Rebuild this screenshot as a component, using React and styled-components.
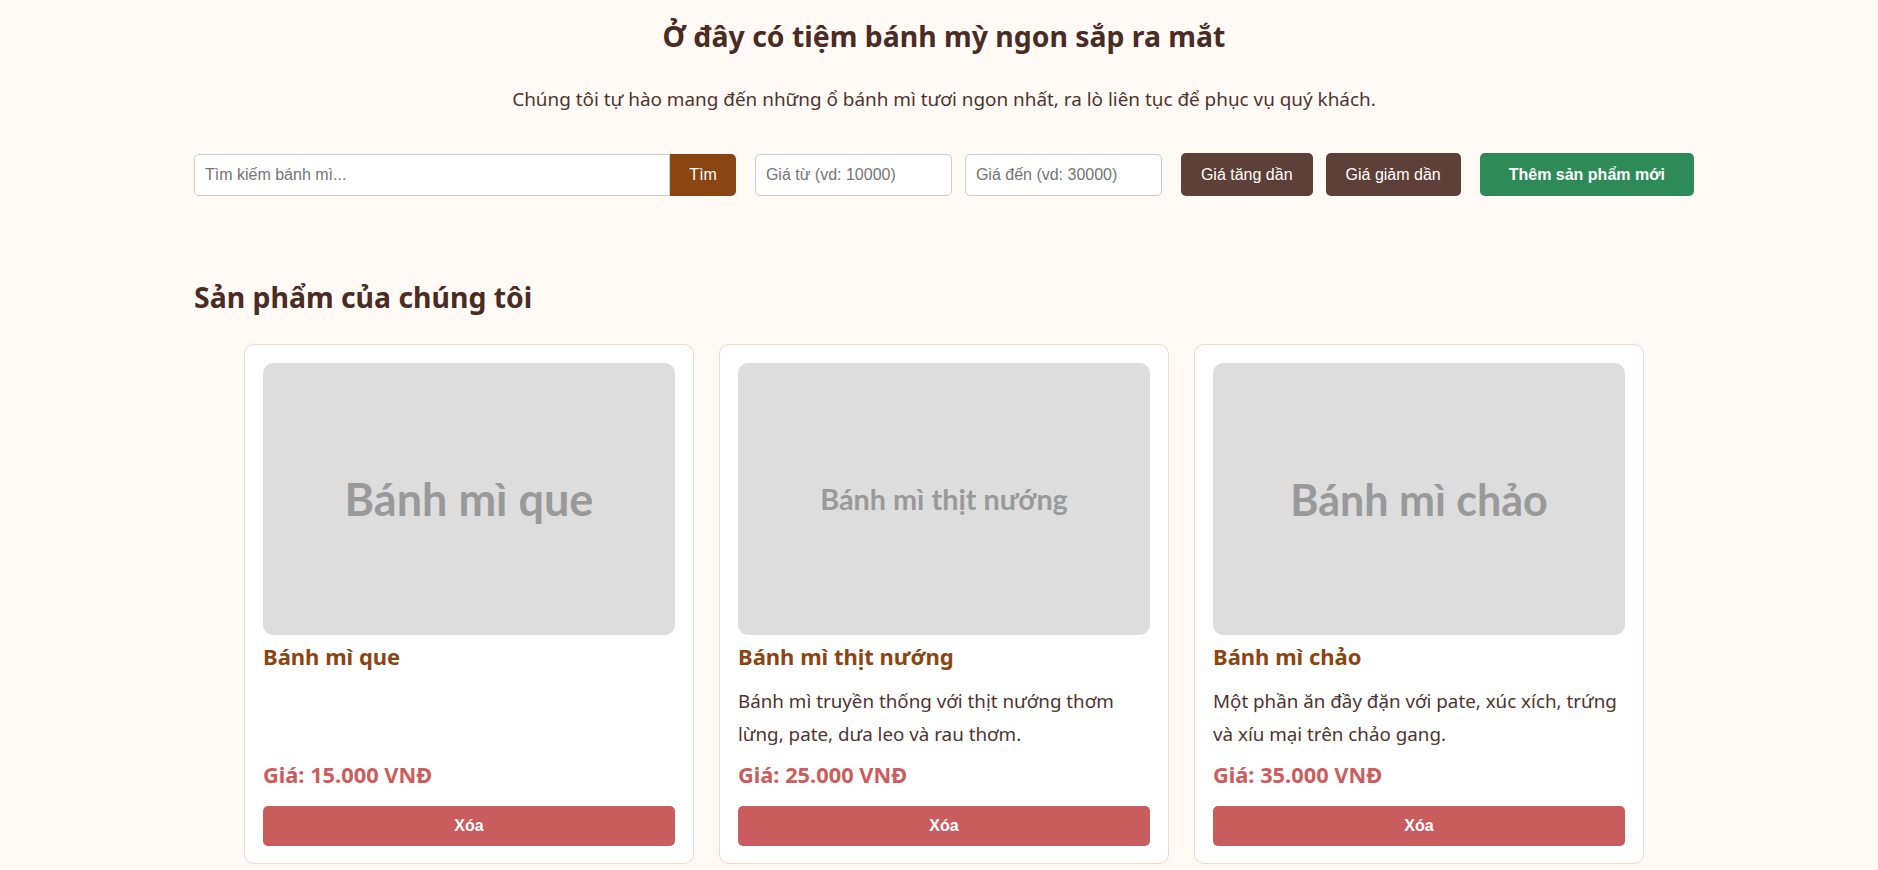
import styled, { createGlobalStyle } from 'styled-components';

const products = [
  {
    name: 'Bánh mì que',
    description: '',
    price: '15.000',
    imageSize: 45,
  },
  {
    name: 'Bánh mì thịt nướng',
    description: 'Bánh mì truyền thống với thịt nướng thơm lừng, pate, dưa leo và rau thơm.',
    price: '25.000',
    imageSize: 28.8,
  },
  {
    name: 'Bánh mì chảo',
    description: 'Một phần ăn đầy đặn với pate, xúc xích, trứng và xíu mại trên chảo gang.',
    price: '35.000',
    imageSize: 43,
  },
];

const GlobalStyle = createGlobalStyle`
  * {
    box-sizing: border-box;
  }

  body {
    margin: 0;
    background: #fffaf5;
    font-family: 'Noto Sans', 'Open Sans', sans-serif;
    color: #4e342e;
  }
`;

const Page = styled.div`
  padding: 17px 0 0 10px;
`;

const Container = styled.main`
  max-width: 1500px;
  margin: 0 auto;
`;

const Header = styled.header`
  text-align: center;
`;

const Title = styled.h1`
  margin: 0;
  font-size: 28.4px;
  line-height: 38px;
  font-weight: 700;
  color: #4a2c24;
`;

const Lead = styled.p`
  margin: 31px 0 0;
  font-size: 18.9px;
  line-height: 27px;
  color: #4e342e;
`;

const Toolbar = styled.div`
  display: flex;
  align-items: center;
  gap: 19px;
  margin-top: 40px;
`;

const SearchGroup = styled.div`
  display: flex;
  flex: 1;
  height: 42px;
`;

const Field = styled.input`
  height: 42px;
  width: ${({ $width }) => ($width ? `${$width}px` : 'auto')};
  flex: ${({ $grow }) => ($grow ? 1 : 'none')};
  min-width: 0;
  padding: 0 10px;
  border: 1px solid #ccc;
  border-radius: ${({ $joined }) => ($joined ? '5px 0 0 5px' : '5px')};
  background: #fff;
  font-family: 'Liberation Sans', Arial, sans-serif;
  font-size: 16px;
  color: #333;
  outline: none;

  &::placeholder {
    color: #757575;
  }
`;

const Group = styled.div`
  display: flex;
  gap: 13px;
`;

const Button = styled.button`
  height: ${({ $tall }) => ($tall ? 43 : 42)}px;
  padding: 0 ${({ $pad }) => $pad}px;
  border: none;
  border-radius: ${({ $joined }) => ($joined ? '0 5px 5px 0' : '5px')};
  background: ${({ $bg }) => $bg};
  color: #fff;
  font-family: 'Liberation Sans', Arial, sans-serif;
  font-size: 16px;
  font-weight: ${({ $bold }) => ($bold ? 700 : 400)};
  cursor: pointer;
  white-space: nowrap;
`;

const SectionTitle = styled.h2`
  margin: 82px 0 0;
  font-size: 28.4px;
  line-height: 38px;
  font-weight: 700;
  color: #4a2c24;
`;

const Grid = styled.div`
  display: grid;
  grid-template-columns: repeat(3, 450px);
  gap: 25px;
  justify-content: center;
  margin-top: 28px;
`;

const Card = styled.article`
  display: flex;
  flex-direction: column;
  padding: 18px 18px 17px;
  background: #fff;
  border: 1px solid #f1d6d2;
  border-radius: 10px;
`;

const Placeholder = styled.div`
  height: 272px;
  display: flex;
  align-items: center;
  justify-content: center;
  background: #dddddd;
  border-radius: 10px;
  font-family: Lato, sans-serif;
  font-weight: 700;
  font-size: ${({ $size }) => $size}px;
  color: #999;
`;

const Name = styled.h3`
  margin: 8px 0 0;
  font-size: 22px;
  line-height: 26px;
  font-weight: 700;
  color: #8b4513;
`;

const Description = styled.p`
  margin: 16px 0 0;
  font-size: 18.8px;
  line-height: 32.5px;
  color: #4e342e;
`;

const Price = styled.p`
  margin: auto 0 0;
  padding-top: 12px;
  font-size: 21.8px;
  line-height: 26px;
  font-weight: 700;
  color: #cd5c5c;
`;

const DeleteButton = styled.button`
  height: 40px;
  margin-top: 18px;
  border: none;
  border-radius: 5px;
  background: #c95c5c;
  color: #fff;
  font-family: 'Liberation Sans', Arial, sans-serif;
  font-size: 16px;
  font-weight: 700;
  cursor: pointer;
`;

export default function App() {
  return (
    <>
      <GlobalStyle />
      <Page>
        <Container>
          <Header>
            <Title>Ở đây có tiệm bánh mỳ ngon sắp ra mắt</Title>
            <Lead>
              Chúng tôi tự hào mang đến những ổ bánh mì tươi ngon nhất, ra lò liên tục để phục vụ quý khách.
            </Lead>
          </Header>

          <Toolbar>
            <SearchGroup>
              <Field $grow $joined placeholder="Tìm kiếm bánh mì..." />
              <Button $joined $pad={19} $bg="#8b4513">Tìm</Button>
            </SearchGroup>
            <Group>
              <Field $width={197} placeholder="Giá từ (vd: 10000)" />
              <Field $width={197} placeholder="Giá đến (vd: 30000)" />
            </Group>
            <Group>
              <Button $tall $pad={20} $bg="#5d4037">Giá tăng dần</Button>
              <Button $tall $pad={20} $bg="#5d4037">Giá giảm dần</Button>
            </Group>
            <Button $tall $bold $pad={29} $bg="#2e8b57">Thêm sản phẩm mới</Button>
          </Toolbar>

          <SectionTitle>Sản phẩm của chúng tôi</SectionTitle>

          <Grid>
            {products.map((product) => (
              <Card key={product.name}>
                <Placeholder $size={product.imageSize}>{product.name}</Placeholder>
                <Name>{product.name}</Name>
                {product.description && <Description>{product.description}</Description>}
                <Price>Giá: {product.price} VNĐ</Price>
                <DeleteButton>Xóa</DeleteButton>
              </Card>
            ))}
          </Grid>
        </Container>
      </Page>
    </>
  );
}
